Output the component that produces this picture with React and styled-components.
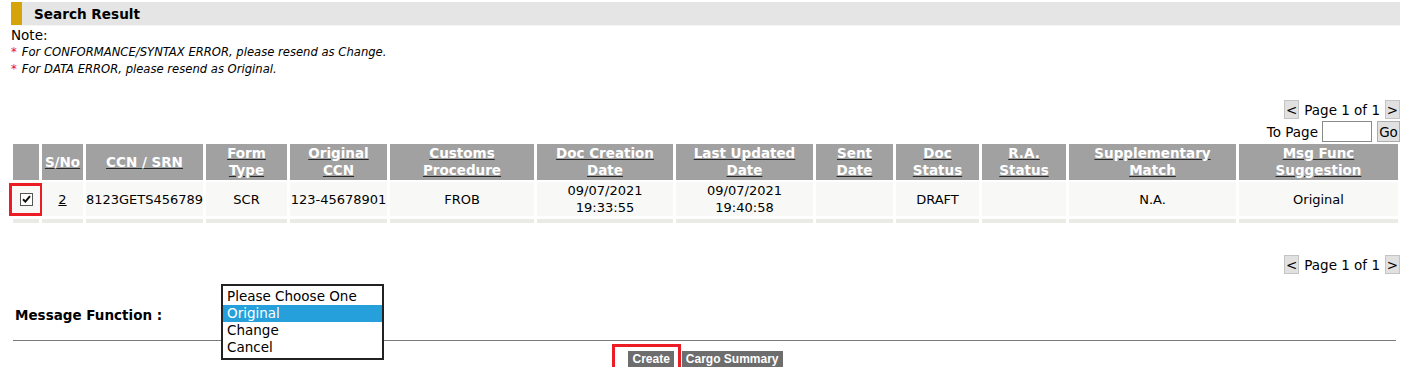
import React from 'react';
import styled, { createGlobalStyle } from 'styled-components';

const GlobalStyle = createGlobalStyle`
  body {
    margin: 0;
    background: #fff;
    font-family: "DejaVu Sans", Verdana, sans-serif;
    font-size: 13.5px;
    color: #000;
  }
`;

// Layout
const Page = styled.div`
  padding: 2px 3px 0 11px;
`;

const SectionBar = styled.div`
  display: flex;
  height: 23px;
  background: #e5e5e5;
  border-bottom: 1px solid #f6f6f6;
`;

const Stripe = styled.span`
  width: 11px;
  background: #d5a30a;
`;

const SectionTitle = styled.span`
  display: flex;
  align-items: center;
  padding-left: 12px;
  font-weight: bold;
  font-size: 13.6px;
`;

const Notes = styled.div`
  margin-top: 1px;
  line-height: 17px;
`;

const NoteLine = styled.div`
  font-size: 11.6px;
  font-style: italic;
  line-height: 17px;
`;

const Star = styled.span`
  color: #e8101a;
  font-style: normal;
  margin-right: 5px;
`;

const Pager = styled.div`
  display: flex;
  flex-direction: column;
  align-items: flex-end;
  margin-top: ${(p) => p.$top || 0}px;
`;

const PagerRow = styled.div`
  display: flex;
  align-items: center;
  gap: 5px;
  height: 19px;
`;

const ArrowBtn = styled.span`
  display: flex;
  align-items: center;
  justify-content: center;
  box-sizing: border-box;
  width: 15px;
  height: 19px;
  background: #e1e1e1;
  border: 1px solid #c4c4c4;
  font-size: 13.5px;
`;

const ToPageRow = styled.div`
  display: flex;
  align-items: center;
  gap: 4px;
  margin-top: 2px;
`;

const PageInput = styled.input`
  box-sizing: border-box;
  width: 50px;
  height: 21px;
  border: 1px solid #8a8a8a;
  padding: 0;
  margin: 0 1px 0 0;
`;

const GoBtn = styled.span`
  display: flex;
  align-items: center;
  justify-content: center;
  box-sizing: border-box;
  width: 23px;
  height: 21px;
  background: #e1e1e1;
  border: 1px solid #adadad;
  font-size: 13.5px;
`;

// Table
const Grid = styled.div`
  display: grid;
  grid-template-columns: 26px 41px 117px 81px 97px 144px 136px 137px 77px 83px 84px 167px 159px;
  column-gap: 3px;
  row-gap: 2px;
  margin: 2px 2px 0 2px;
`;

const HeadCell = styled.div`
  display: flex;
  align-items: center;
  justify-content: center;
  height: 36px;
  background: #a1a1a1;
  color: #fff;
  font-weight: bold;
  font-size: 13.5px;
  line-height: 17px;
  text-align: center;
  text-decoration: underline;
  text-decoration-color: #2a2a2a;
`;

const Cell = styled.div`
  position: relative;
  display: flex;
  align-items: center;
  justify-content: center;
  height: 34px;
  background: #f8f8f6;
  font-size: 13px;
  line-height: 17px;
  text-align: center;
`;

const SpacerCell = styled.div`
  height: 4px;
  margin-top: 1px;
  background: #ebebe6;
`;

const LinkText = styled.span`
  text-decoration: underline;
`;

const Check = styled.span`
  display: flex;
  align-items: center;
  justify-content: center;
  box-sizing: border-box;
  width: 13px;
  height: 13px;
  background: #fff;
  border: 1px solid #555;
`;

const Highlight = styled.span`
  position: absolute;
  top: ${(p) => p.$t}px;
  right: ${(p) => p.$r}px;
  bottom: ${(p) => p.$b}px;
  left: ${(p) => p.$l}px;
  border: 3px solid #ec1c24;
  pointer-events: none;
`;

// Message function form
const FunctionRow = styled.div`
  position: relative;
  height: 56px;
  margin-top: 10px;
  padding-left: 4px;
`;

const FunctionLabel = styled.div`
  padding-top: 23px;
  font-weight: bold;
  font-size: 13.5px;
`;

const ListBox = styled.div`
  position: absolute;
  left: 210px;
  top: 0;
  z-index: 1;
  width: 159px;
  padding: 2px 0;
  background: #fff;
  border: 2px solid #222;
`;

const Option = styled.div`
  height: 17px;
  line-height: 17px;
  padding-left: 4px;
  font-size: 13.5px;
  background: ${(p) => (p.$selected ? '#26a0da' : 'transparent')};
  color: ${(p) => (p.$selected ? '#fff' : '#000')};
`;

const Divider = styled.div`
  border-top: 1px solid #7a7a7a;
  margin: 0 4px 0 2px;
`;

const ButtonRow = styled.div`
  display: flex;
  justify-content: center;
  gap: 8px;
  margin-top: 10px;
`;

const ActionWrap = styled.span`
  position: relative;
  display: inline-flex;
`;

const ActionBtn = styled.span`
  display: inline-block;
  height: 16px;
  line-height: 16px;
  padding: 0 4px;
  background: #6d6d6d;
  color: #fff;
  font-family: "Liberation Sans", Arial, sans-serif;
  font-weight: bold;
  font-size: 12px;
`;

const columns = [
  'S/No', 'CCN / SRN', 'Form Type', 'Original CCN', 'Customs Procedure',
  'Doc Creation Date', 'Last Updated Date', 'Sent Date', 'Doc Status',
  'R.A. Status', 'Supplementary Match', 'Msg Func Suggestion',
];

const narrowHeads = {
  'Form Type': ['Form', 'Type'],
  'Original CCN': ['Original', 'CCN'],
  'Customs Procedure': ['Customs', 'Procedure'],
  'Doc Creation Date': ['Doc Creation', 'Date'],
  'Last Updated Date': ['Last Updated', 'Date'],
  'Sent Date': ['Sent', 'Date'],
  'Doc Status': ['Doc', 'Status'],
  'R.A. Status': ['R.A.', 'Status'],
  'Supplementary Match': ['Supplementary', 'Match'],
  'Msg Func Suggestion': ['Msg Func', 'Suggestion'],
};

const row = [
  '8123GETS456789', 'SCR', '123-45678901', 'FROB',
  ['09/07/2021', '19:33:55'], ['09/07/2021', '19:40:58'],
  '', 'DRAFT', '', 'N.A.', 'Original',
];

const CheckMark = () => (
  <svg width="9" height="8" viewBox="0 0 9 8">
    <path d="M1 4.2 L3.4 6.6 L8 1.2" fill="none" stroke="#111" strokeWidth="2" />
  </svg>
);

const PageNav = ({ top, withJump }) => (
  <Pager $top={top}>
    <PagerRow>
      <ArrowBtn>&lt;</ArrowBtn>
      <span>Page 1 of 1</span>
      <ArrowBtn>&gt;</ArrowBtn>
    </PagerRow>
    {withJump && (
      <ToPageRow>
        <span>To Page</span>
        <PageInput type="text" />
        <GoBtn>Go</GoBtn>
      </ToPageRow>
    )}
  </Pager>
);

const renderLines = (lines) =>
  lines.map((l, i) => (
    <React.Fragment key={i}>
      {i > 0 && <br />}
      {l}
    </React.Fragment>
  ));

export default function App() {
  return (
    <Page>
      <GlobalStyle />
      <SectionBar>
        <Stripe />
        <SectionTitle>Search Result</SectionTitle>
      </SectionBar>

      <Notes>
        <div>Note:</div>
        <NoteLine><Star>*</Star>For CONFORMANCE/SYNTAX ERROR, please resend as Change.</NoteLine>
        <NoteLine><Star>*</Star>For DATA ERROR, please resend as Original.</NoteLine>
      </Notes>

      <PageNav top={22} withJump />

      <Grid>
        <HeadCell />
        {columns.map((c) => (
          <HeadCell key={c}>
            <span>{narrowHeads[c] ? renderLines(narrowHeads[c]) : c}</span>
          </HeadCell>
        ))}

        <Cell>
          <Check><CheckMark /></Check>
          <Highlight $t={1} $r={-4} $b={0} $l={-4} />
        </Cell>
        <Cell><LinkText>2</LinkText></Cell>
        {row.map((v, i) => (
          <Cell key={i}>
            <span>{Array.isArray(v) ? renderLines(v) : v}</span>
          </Cell>
        ))}

        {Array.from({ length: 13 }).map((_, i) => (
          <SpacerCell key={i} />
        ))}
      </Grid>

      <PageNav top={32} />

      <FunctionRow>
        <FunctionLabel>Message Function :</FunctionLabel>
        <ListBox>
          <Option>Please Choose One</Option>
          <Option $selected>Original</Option>
          <Option>Change</Option>
          <Option>Cancel</Option>
        </ListBox>
      </FunctionRow>
      <Divider />

      <ButtonRow>
        <ActionWrap>
          <ActionBtn>Create</ActionBtn>
          <Highlight $t={-7} $r={-7} $b={-9} $l={-16} />
        </ActionWrap>
        <ActionBtn>Cargo Summary</ActionBtn>
      </ButtonRow>
    </Page>
  );
}
